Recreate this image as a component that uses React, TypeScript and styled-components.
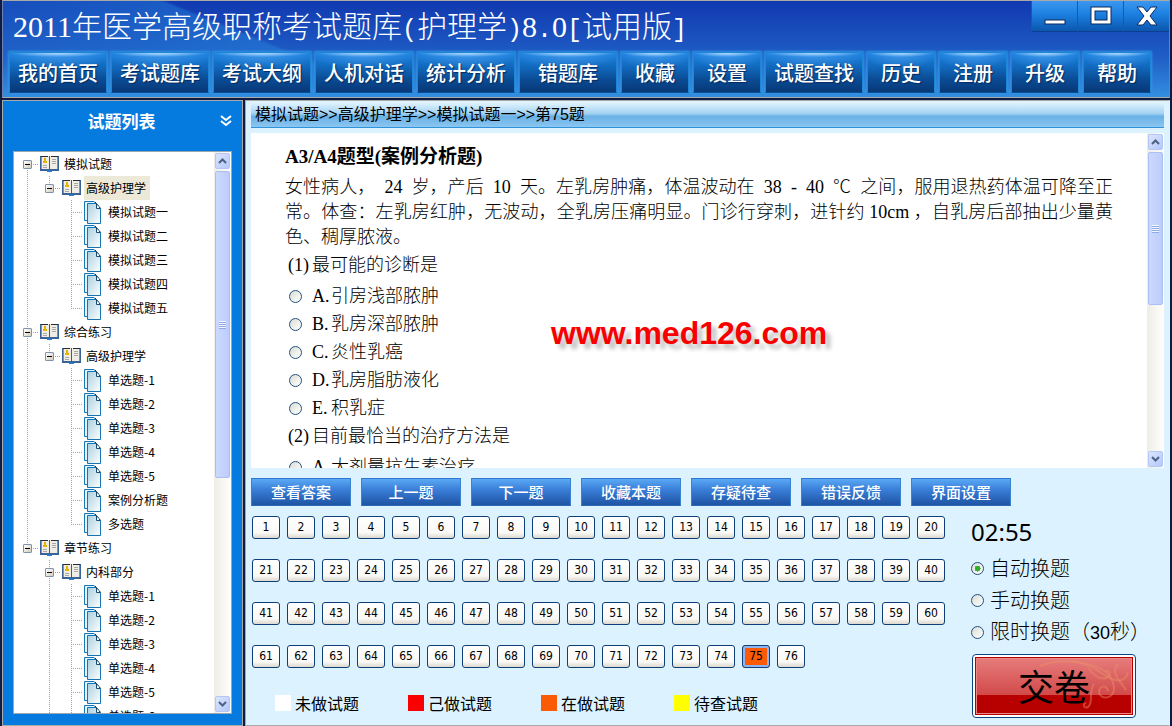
import React, { useState } from "react";
import styled, { createGlobalStyle, css } from "styled-components";

const GlobalStyle = createGlobalStyle`
  *, *::before, *::after { box-sizing: border-box; }
  body {
    margin: 0;
    background: #0d1c44;
    color: #000;
    font-family: "Noto Sans CJK SC", sans-serif;
    text-spacing-trim: space-all;
  }
  button { font-family: inherit; margin: 0; padding: 0; cursor: pointer; }
  h1, h2, p, ul, fieldset { margin: 0; padding: 0; }
  ul { list-style: none; }
  fieldset { border: 0; min-width: 0; }
`;

/* ---------- window frame ---------- */

const Window = styled.div`
  height: 100vh;
  min-height: 620px;
  padding: 0 2px;
  display: flex;
  flex-direction: column;
  gap: 2px;
`;

const Header = styled.header`
  flex: none;
  border: 1px solid #a9aaa8;
  border-left-color: #6f7fae;
  border-right-color: #6f7fae;
  background:
    linear-gradient(202deg, transparent 52%, rgba(40, 140, 225, 0.4) 53%, rgba(40, 140, 225, 0.1) 90%) 0 0 / 600px 100% no-repeat,
    linear-gradient(#1139b0, #1f5fc6 60%, #348ee0);
`;

const TitleRow = styled.div`
  display: flex;
  justify-content: space-between;
  align-items: flex-start;
  height: 51px;
  padding-left: 10px;
`;

const Title = styled.h1`
  color: #fff;
  font-family: "Liberation Serif", "Noto Sans CJK SC", serif;
  font-size: 30px;
  line-height: 51px;
  font-weight: 300;
  white-space: nowrap;
`;

const Mark = styled.span`
  font-family: "Liberation Mono", monospace;
  font-size: 25px;
  line-height: 1;
`;

const WindowControls = styled.div`
  display: flex;
`;

const ControlButton = styled.button`
  width: 46px;
  height: 31px;
  border: 0;
  border-left: 1px solid #1559b5;
  border-bottom: 1px solid #0c3f90;
  background: linear-gradient(#3b97f0, #1c7fe0 45%, #0c56ae);
  display: flex;
  align-items: center;
  justify-content: center;
`;

const Nav = styled.nav`
  display: flex;
  gap: 4px;
  padding: 0 6px 4px;
`;

const NavButton = styled.button<{ $wide: boolean }>`
  width: ${(p) => (p.$wide ? 98 : 68)}px;
  height: 41px;
  border: 1px solid #1c86d4;
  border-bottom-color: #0a4f96;
  background:
    radial-gradient(ellipse 50% 4px at 50% 0, #b4dcff, transparent) no-repeat,
    radial-gradient(ellipse 60% 16px at 50% 0, rgba(80, 165, 245, 0.7), transparent) no-repeat,
    linear-gradient(#1a80e0, #1169bd 35%, #0a4a92 70%, #073877);
  box-shadow: 0 0 2px 1px #3293e2;
  color: #fff;
  font-size: 20px;
  line-height: 39px;
  font-weight: 500;
  text-shadow: 1px 1px 1px #06295c;
  white-space: nowrap;
`;

const Body = styled.div`
  flex: 1;
  min-height: 0;
  display: flex;
  gap: 2px;
`;

/* ---------- sidebar ---------- */

const Sidebar = styled.aside`
  flex: none;
  width: 241px;
  padding: 0 10px 11px;
  border: 1px solid #a9aaa8;
  background: #067bdf;
  display: flex;
  flex-direction: column;
`;

const SidebarHead = styled.div`
  height: 50px;
  flex: none;
  display: flex;
  align-items: center;
  padding: 0 0 10px 10px;
`;

const SidebarTitle = styled.h2`
  flex: 1;
  color: #fff;
  font-size: 17px;
  line-height: 24px;
  text-align: center;
`;

const CollapseButton = styled.button`
  border: 0;
  background: none;
  width: 12px;
  height: 14px;
  display: flex;
`;

const TreeBox = styled.div`
  flex: 1;
  min-height: 0;
  display: flex;
  border: 1px solid #9aa7b0;
  background: #fff;
  overflow: hidden;
`;

const Tree = styled.ul`
  flex: 1;
  padding: 0 0 0 2px;
`;

const TreeRow = styled.li`
  display: flex;
  height: 24px;
`;

type Rail = "none" | "full" | "top" | "bottom";

const railSize = { none: "1px 0", full: "1px 24px", top: "1px 12px", bottom: "1px 12px" };

const RailCell = styled.span<{ $rail: Rail; $branch: boolean }>`
  flex: none;
  width: 22px;
  height: 24px;
  display: flex;
  align-items: center;
  justify-content: center;
  background-image:
    repeating-linear-gradient(#a3a396 0 1px, transparent 1px 2px),
    repeating-linear-gradient(90deg, #a3a396 0 1px, transparent 1px 2px);
  background-size: ${(p) => railSize[p.$rail]}, ${(p) => (p.$branch ? "11px 1px" : "0 0")};
  background-position: 11px ${(p) => (p.$rail === "bottom" ? "100%" : "0")}, 11px 12px;
  background-repeat: no-repeat;
`;

const Toggle = styled.button`
  width: 9px;
  height: 9px;
  border: 1px solid #7f93ab;
  border-radius: 1px;
  background: linear-gradient(#000, #000) center / 5px 1px no-repeat, linear-gradient(135deg, #fff, #d2ccbe);
`;

const IconCell = styled.span`
  flex: none;
  width: 22px;
  height: 24px;
  display: flex;
  align-items: center;
  justify-content: center;
`;

const TreeLabel = styled.button<{ $selected?: boolean }>`
  border: 0;
  margin-left: 2px;
  padding: 0 4px 0 2px;
  background: ${(p) => (p.$selected ? "#ece9d8" : "transparent")};
  font-size: 12px;
  line-height: 24px;
  white-space: nowrap;
`;

/* ---------- scroll bar ---------- */

const ScrollTrack = styled.div`
  flex: none;
  width: 17px;
  padding: 1px;
  display: flex;
  flex-direction: column;
  gap: 2px;
  background: linear-gradient(90deg, #efede6, #fefefb);
`;

const ScrollButton = styled.button`
  flex: none;
  width: 15px;
  height: 16px;
  border: 1px solid #b3c6f6;
  border-radius: 2px;
  background: linear-gradient(135deg, #dbe5ff, #b4c8f8);
  display: flex;
  align-items: center;
  justify-content: center;
`;

const Thumb = styled.div<{ $share: number }>`
  flex: 0 0 ${(p) => p.$share}%;
  width: 15px;
  border: 1px solid #a9bff5;
  border-radius: 2px;
  background: linear-gradient(90deg, #ccd9ff, #bccdfb);
  display: flex;
  align-items: center;
  justify-content: center;

  &::before {
    content: "";
    width: 7px;
    height: 8px;
    background: repeating-linear-gradient(#f2f6ff 0 1px, #8fa9e6 1px 2px);
  }
`;

const TrackSpace = styled.div`
  flex: 1;
`;

/* ---------- main panel ---------- */

const Main = styled.main`
  flex: 1;
  min-width: 0;
  padding: 1px 5px;
  border: 1px solid #a9aaa8;
  border-right-color: #dcf3ff;
  background: #dcf3ff;
  display: flex;
  flex-direction: column;
`;

const Breadcrumb = styled.div`
  flex: none;
  height: 26px;
  margin-bottom: 5px;
  padding-left: 4px;
  border-bottom: 1px solid #2f93dc;
  background: linear-gradient(#e3f5ff, #a5d3f2 45%, #69b1e6 58%, #8cc6f1);
  font-family: "Liberation Sans", "Noto Sans CJK SC", sans-serif;
  font-size: 16px;
  line-height: 26px;
  font-weight: 400;
  white-space: nowrap;
  overflow: hidden;
`;

const Reader = styled.section`
  position: relative;
  flex: 1;
  min-height: 0;
  display: flex;
  background: #fff;
  overflow: hidden;
`;

const Question = styled.article`
  flex: 1;
  min-width: 0;
  padding: 10px 34px 0 34px;
  font-family: "Liberation Serif", "Noto Sans CJK SC", serif;
  font-weight: 300;
  font-size: 18px;
  line-height: 28px;
`;

const QuestionType = styled.h2`
  font-size: 19px;
  line-height: 28px;
  font-weight: 700;
  margin-bottom: 4px;
`;

const CaseText = styled.p`
  line-height: 25px;
  text-align: justify;
  margin-bottom: 1px;
`;

const SubQuestion = styled.fieldset`
  line-height: 28px;
`;

const Legend = styled.legend`
  display: flex;
  padding: 0 0 3px;
`;

const Ordinal = styled.span`
  width: 27px;
  text-align: center;
`;

const Option = styled.label`
  display: flex;
  align-items: center;
  padding-left: 4px;
  height: 28px;
`;

const OptionKey = styled.span`
  width: 19px;
  margin-left: 10px;
`;

const Radio = styled.input.attrs({ type: "radio" })`
  appearance: none;
  flex: none;
  width: 13px;
  height: 13px;
  margin: 0;
  border: 1px solid #21517f;
  border-radius: 50%;
  background: linear-gradient(135deg, #dcdcd4, #fff);

  &:checked {
    background: radial-gradient(circle, #2fae2b 0 2px, #55c94e 3px, transparent 3px), linear-gradient(135deg, #dcdcd4, #fff);
  }
`;

const Watermark = styled.div`
  position: absolute;
  top: 182px;
  left: 300px;
  color: #f80000;
  font-family: "Liberation Sans", sans-serif;
  font-size: 32px;
  line-height: 36px;
  font-weight: 700;
  text-shadow: 5px 5px 4px rgba(0, 0, 0, 0.25);
  pointer-events: none;
`;

const Actions = styled.div`
  flex: none;
  display: flex;
  gap: 10px;
  padding: 10px 0;
`;

const ActionButton = styled.button`
  width: 100px;
  height: 28px;
  border: 1px solid #3c83cf;
  border-top-color: #2f78d2;
  border-bottom-color: #2c69b4;
  background: linear-gradient(#5aa9f4, #3a7fd9 40%, #1f54a4);
  color: #fff;
  font-size: 15px;
  line-height: 26px;
  font-weight: 500;
`;

const Lower = styled.div`
  flex: none;
  display: flex;
  gap: 26px;
  padding-left: 1px;
`;

const Sheet = styled.div`
  flex: none;
`;

const NumberGrid = styled.div`
  display: grid;
  grid-template-columns: repeat(20, 28px);
  gap: 20px 7px;
`;

const NumberButton = styled.button<{ $current: boolean }>`
  height: 23px;
  border: 1px solid #0f3f78;
  border-radius: 3px;
  background: linear-gradient(#fff, #faf9f6 75%, #dcd8cc);
  font-family: "DejaVu Sans Condensed", "DejaVu Sans", sans-serif;
  font-size: 12px;
  line-height: 21px;
  ${(p) =>
    p.$current &&
    css`
      background: #fb5b04;
      box-shadow: inset 0 0 0 2px #8fb4f2;
    `}
`;

const StatusLegend = styled.ul`
  display: flex;
  gap: 49px;
  padding: 22px 0 0 23px;
`;

const StatusItem = styled.li`
  display: flex;
  align-items: center;
  gap: 4px;
  font-size: 16px;
  line-height: 26px;
  white-space: nowrap;
`;

const Swatch = styled.span<{ $color: string }>`
  width: 16px;
  height: 16px;
  background: ${(p) => p.$color};
`;

const Controls = styled.div`
  flex: 1;
  min-width: 0;
  padding-bottom: 6px;
`;

const Timer = styled.div`
  font-family: "Noto Sans", sans-serif;
  font-size: 24px;
  line-height: 32px;
  margin-bottom: 4px;
`;

const ModeOption = styled.label`
  display: flex;
  align-items: center;
  gap: 6px;
  height: 32px;
  font-size: 20px;
  line-height: 32px;
  font-weight: 300;
  white-space: nowrap;
`;

const Seconds = styled.span`
  font-family: "Liberation Sans", sans-serif;
  font-size: 18px;
`;

const SubmitButton = styled.button`
  display: block;
  width: 164px;
  height: 64px;
  margin: 6px 0 0 1px;
  padding: 2px;
  border: 1px solid #0f4382;
  border-radius: 4px;
  background: #fff;
`;

const SubmitFace = styled.span`
  position: relative;
  display: block;
  height: 58px;
  border: 1px solid #b40000;
  box-shadow: inset 0 0 0 1px #e88;
  background: linear-gradient(#e67c7c, #d24a4a 66%, #b80000 67%, #b50000);
  font-size: 36px;
  line-height: 54px;
  font-weight: 400;
`;

const SubmitText = styled.span`
  position: relative;
`;

const Flourish = styled.svg`
  position: absolute;
  right: 2px;
  top: 2px;
`;

/* ---------- drawings ---------- */

const BookIcon = () => (
  <svg width="19" height="18" viewBox="0 0 19 18" aria-hidden="true">
    <path d="M0 1h19v15H0z" fill="#3a6296" />
    <path d="M1 1h8v13H1zM10 1h8v13h-8z" fill="#efede6" />
    <path d="M1.500 1v13M17.500 1v13" stroke="#8a9096" />
    <path d="M9.500 2v13" stroke="#55585c" strokeWidth="1" />
    <path d="M1 1.500h7M11 1.500h7" stroke="#2a2c30" />
    <path d="M4 3h2v3h1v2H3V6h1z" fill="#e8b400" />
    <path d="M3 10.500h4M3 12.500h4M12 4.500h4M12 6.500h4M12 8.500h4" stroke="#a8a8a4" />
    <path d="M7 15h5v2H7z" fill="#2878c8" />
  </svg>
);

const PageIcon = () => (
  <svg width="18" height="23" viewBox="0 0 18 23" aria-hidden="true">
    <defs>
      <linearGradient id="sheet" x1="0" y1="0" x2="1" y2="1">
        <stop offset="0" stopColor="#a9cfe2" />
        <stop offset="1" stopColor="#fff" />
      </linearGradient>
    </defs>
    <path d="M3 19.500H.5V.5h9.500l2 2" fill="#e4f2f9" stroke="#1676b4" />
    <path d="M3.500 2.500h9l4 5v15h-13z" fill="url(#sheet)" stroke="#1676b4" />
    <path d="M12.500 2.500v5h4" fill="#fff" stroke="#124e7c" />
    <path d="M11 1l6 7" stroke="#222" strokeDasharray="2 1" />
  </svg>
);

const Arrow = ({ up }: { up?: boolean }) => (
  <svg width="9" height="6" viewBox="0 0 9 6" aria-hidden="true">
    <path d={up ? "M1 5l3.500-3.500L8 5" : "M1 1l3.500 3.500L8 1"} fill="none" stroke="#4d6185" strokeWidth="2" />
  </svg>
);

const ScrollBar = ({ share }: { share: number }) => (
  <ScrollTrack>
    <ScrollButton aria-label="向上滚动">
      <Arrow up />
    </ScrollButton>
    <Thumb $share={share} />
    <TrackSpace />
    <ScrollButton aria-label="向下滚动">
      <Arrow />
    </ScrollButton>
  </ScrollTrack>
);

/* ---------- data ---------- */

const navItems = [
  "我的首页", "考试题库", "考试大纲", "人机对话", "统计分析", "错题库", "收藏",
  "设置", "试题查找", "历史", "注册", "升级", "帮助",
];

const treeData = [
  { name: "模拟试题", child: "高级护理学", more: false, leaves: ["模拟试题一", "模拟试题二", "模拟试题三", "模拟试题四", "模拟试题五"] },
  { name: "综合练习", child: "高级护理学", more: false, leaves: ["单选题-1", "单选题-2", "单选题-3", "单选题-4", "单选题-5", "案例分析题", "多选题"] },
  { name: "章节练习", child: "内科部分", more: true, leaves: ["单选题-1", "单选题-2", "单选题-3", "单选题-4", "单选题-5", "单选题-6"] },
];

const options = [
  ["A.", "引房浅部脓肿"],
  ["B.", "乳房深部脓肿"],
  ["C.", "炎性乳癌"],
  ["D.", "乳房脂肪液化"],
  ["E.", "积乳症"],
];

const caseText =
  "女性病人，\u00a0 24\u00a0 岁，产后\u00a0 10\u00a0 天。左乳房肿痛，体温波动在\u00a0 38\u00a0 -\u00a0 40\u00a0 ℃\u00a0 之间，" +
  "服用退热药体温可降至正常。体查：左乳房红肿，无波动，全乳房压痛明显。" +
  "门诊行穿刺，进针约 10cm ，自乳房后部抽出少量黄色、稠厚脓液。";

const actions = ["查看答案", "上一题", "下一题", "收藏本题", "存疑待查", "错误反馈", "界面设置"];

const statuses = [
  ["#ffffff", "未做试题"],
  ["#fa0000", "己做试题"],
  ["#fb5b04", "在做试题"],
  ["#ffff00", "待查试题"],
];

export default function App() {
  const [current, setCurrent] = useState(75);
  const [mode, setMode] = useState("auto");

  return (
    <>
      <GlobalStyle />
      <Window>
        <Header>
          <TitleRow>
            <Title>
              2011年医学高级职称考试题库<Mark>(</Mark>护理学<Mark>)</Mark>8<Mark>.</Mark>0<Mark>[</Mark>试用版<Mark>]</Mark>
            </Title>
            <WindowControls>
              <ControlButton aria-label="最小化">
                <svg width="22" height="22" viewBox="0 0 22 22">
                  <rect x="1" y="15" width="20" height="4" fill="#fff" stroke="#0b2a5c" />
                </svg>
              </ControlButton>
              <ControlButton aria-label="最大化">
                <svg width="22" height="22" viewBox="0 0 22 22">
                  <rect x="3" y="4" width="16" height="13" fill="none" stroke="#0b2a5c" strokeWidth="5" />
                  <rect x="3" y="4" width="16" height="13" fill="none" stroke="#fff" strokeWidth="3" />
                </svg>
              </ControlButton>
              <ControlButton aria-label="关闭">
                <svg width="22" height="22" viewBox="0 0 22 22">
                  <path d="M1 2h6l4 5 4-5h6l-7 9 7 9h-6l-4-5-4 5H1l7-9z" fill="#fff" stroke="#0b2a5c" />
                </svg>
              </ControlButton>
            </WindowControls>
          </TitleRow>
          <Nav>
            {navItems.map((item) => (
              <NavButton key={item} $wide={item.length > 2}>{item}</NavButton>
            ))}
          </Nav>
        </Header>

        <Body>
          <Sidebar>
            <SidebarHead>
              <SidebarTitle>试题列表</SidebarTitle>
              <CollapseButton aria-label="收起">
                <svg width="12" height="14" viewBox="0 0 12 14">
                  <path d="M1 2l5 4 5-4M1 7l5 4 5-4" fill="none" stroke="#fff" strokeWidth="2" />
                </svg>
              </CollapseButton>
            </SidebarHead>
            <TreeBox>
              <Tree>
                {treeData.map((group, g) => {
                  const last = g === treeData.length - 1;
                  const outer: Rail = last ? "none" : "full";
                  return (
                    <React.Fragment key={group.name}>
                      <TreeRow>
                        <RailCell $rail={g === 0 ? "bottom" : last ? "top" : "full"} $branch>
                          <Toggle aria-label={"折叠" + group.name} />
                        </RailCell>
                        <IconCell><BookIcon /></IconCell>
                        <TreeLabel>{group.name}</TreeLabel>
                      </TreeRow>
                      <TreeRow>
                        <RailCell $rail={outer} $branch={false} />
                        <RailCell $rail={group.more ? "full" : "top"} $branch>
                          <Toggle aria-label={"折叠" + group.child} />
                        </RailCell>
                        <IconCell><BookIcon /></IconCell>
                        <TreeLabel $selected={g === 0}>{group.child}</TreeLabel>
                      </TreeRow>
                      {group.leaves.map((leaf, i) => (
                        <TreeRow key={leaf}>
                          <RailCell $rail={outer} $branch={false} />
                          <RailCell $rail={group.more ? "full" : "none"} $branch={false} />
                          <RailCell $rail={i === group.leaves.length - 1 && !group.more ? "top" : "full"} $branch />
                          <IconCell><PageIcon /></IconCell>
                          <TreeLabel>{leaf}</TreeLabel>
                        </TreeRow>
                      ))}
                    </React.Fragment>
                  );
                })}
              </Tree>
              <ScrollBar share={55} />
            </TreeBox>
          </Sidebar>

          <Main>
            <Breadcrumb>模拟试题&gt;&gt;高级护理学&gt;&gt;模拟试题一&gt;&gt;第75题</Breadcrumb>
            <Reader>
              <Question>
                <QuestionType>A3/A4题型(案例分析题)</QuestionType>
                <CaseText>{caseText}</CaseText>
                <SubQuestion>
                  <Legend><Ordinal>(1)</Ordinal>最可能的诊断是</Legend>
                  {options.map(([key, text]) => (
                    <Option key={key}>
                      <Radio name="q1" />
                      <OptionKey>{key}</OptionKey>
                      {text}
                    </Option>
                  ))}
                </SubQuestion>
                <SubQuestion>
                  <Legend><Ordinal>(2)</Ordinal>目前最恰当的治疗方法是</Legend>
                  <Option>
                    <Radio name="q2" />
                    <OptionKey>A.</OptionKey>
                    大剂量抗生素治疗
                  </Option>
                </SubQuestion>
              </Question>
              <ScrollBar share={46} />
              <Watermark>www.med126.com</Watermark>
            </Reader>

            <Actions>
              {actions.map((a) => (
                <ActionButton key={a}>{a}</ActionButton>
              ))}
            </Actions>

            <Lower>
              <Sheet>
                <NumberGrid>
                  {Array.from({ length: 76 }, (_, i) => i + 1).map((n) => (
                    <NumberButton key={n} $current={n === current} onClick={() => setCurrent(n)}>{n}</NumberButton>
                  ))}
                </NumberGrid>
                <StatusLegend>
                  {statuses.map(([color, label]) => (
                    <StatusItem key={label}>
                      <Swatch $color={color} />
                      {label}
                    </StatusItem>
                  ))}
                </StatusLegend>
              </Sheet>
              <Controls>
                <Timer>02:55</Timer>
                <ModeOption>
                  <Radio name="mode" checked={mode === "auto"} onChange={() => setMode("auto")} />
                  自动换题
                </ModeOption>
                <ModeOption>
                  <Radio name="mode" checked={mode === "manual"} onChange={() => setMode("manual")} />
                  手动换题
                </ModeOption>
                <ModeOption>
                  <Radio name="mode" checked={mode === "timed"} onChange={() => setMode("timed")} />
                  <span>限时换题（<Seconds>30</Seconds>秒）</span>
                </ModeOption>
                <SubmitButton>
                  <SubmitFace>
                    <Flourish width="92" height="52" viewBox="0 0 92 52" fill="none" stroke="#e9906a" strokeOpacity="0.45" strokeWidth="2" aria-hidden="true">
                      <path d="M2 6C20-2 46 0 62 12s26 10 28 0" />
                      <path d="M34 1c30 4 40 12 42 26 1 12-14 14-15 5 0-7 9-7 9-1" />
                      <path d="M50 8c6 8 12 12 18 10s4-9-1-7" />
                      <path d="M80 4c-8 10 2 16 8 26" />
                      <path d="M56 24c-6 8 0 18-6 23-4 2-6-3-2-4" />
                    </Flourish>
                    <SubmitText>交卷</SubmitText>
                  </SubmitFace>
                </SubmitButton>
              </Controls>
            </Lower>
          </Main>
        </Body>
      </Window>
    </>
  );
}
